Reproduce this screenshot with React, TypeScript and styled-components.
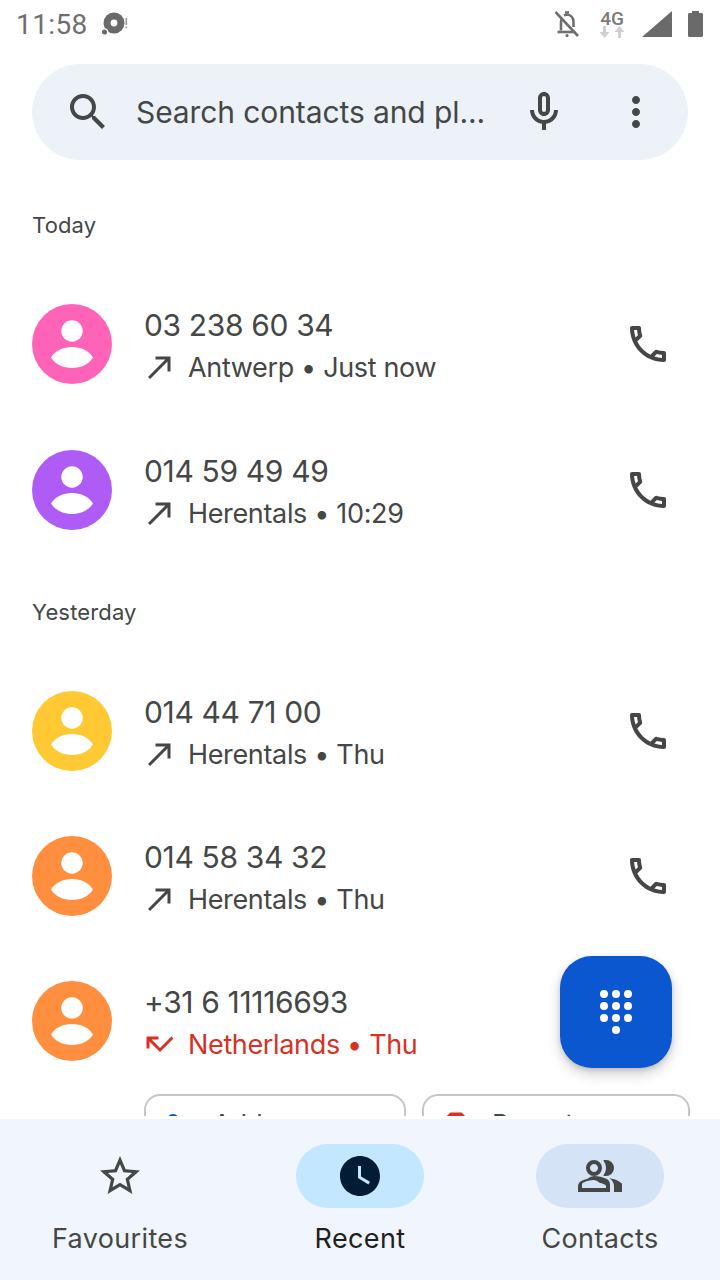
import styled, { createGlobalStyle } from 'styled-components';

const GlobalStyle = createGlobalStyle`
  html, body {
    margin: 0;
    padding: 0;
    background: #fff;
  }
`;

const Screen = styled.div`
  position: relative;
  display: flex;
  flex-direction: column;
  width: 720px;
  height: 1280px;
  overflow: hidden;
  background: #fff;
  font-family: Inter, Roboto, sans-serif;
  color: #444746;
`;

const StatusBar = styled.div`
  display: flex;
  align-items: center;
  flex: none;
  height: 48px;
  padding: 0 17px 0 16px;
`;

const Clock = styled.span`
  font-family: Roboto, sans-serif;
  font-size: 28px;
  color: #6f6f6f;
  letter-spacing: 0.4px;
`;

const StatusLeft = styled.div`
  display: flex;
  align-items: center;
  gap: 13px;
  flex: 1;
`;

const StatusRight = styled.div`
  display: flex;
  align-items: center;
  gap: 16px;
`;

const NetworkBadge = styled.div`
  display: flex;
  flex-direction: column;
  align-items: center;
  width: 28px;
  font-family: Roboto, sans-serif;
  font-size: 19px;
  font-weight: 500;
  line-height: 15px;
  color: #7a7a7a;
`;

const SearchBar = styled.div`
  display: flex;
  align-items: center;
  flex: none;
  height: 96px;
  margin: 16px 32px 0;
  padding: 0 28px 0 32px;
  border-radius: 48px;
  background: #edf2f9;
`;

const SearchLabel = styled.span`
  flex: 1;
  margin-left: 24px;
  font-size: 30px;
  letter-spacing: -0.1px;
  white-space: nowrap;
`;

const MicSlot = styled.div`
  display: flex;
  margin-right: 44px;
`;

const CallList = styled.div`
  flex: 1;
  min-height: 0;
  margin-bottom: 3px;
  overflow: hidden;
`;

const DayHeading = styled.div<{ $top: number }>`
  height: 30px;
  margin: ${(p) => p.$top}px 32px 0;
  font-size: 22px;
  line-height: 30px;
  font-weight: 400;
  letter-spacing: 0.15px;
`;

const CallRow = styled.div<{ $top: number }>`
  display: flex;
  align-items: center;
  height: 80px;
  margin: ${(p) => p.$top}px 32px 0;
`;

const Avatar = styled.svg`
  flex: none;
  width: 80px;
  height: 80px;
`;

const CallText = styled.div`
  flex: 1;
  margin-left: 32px;
  padding-top: 6px;
`;

const CallNumber = styled.div`
  font-size: 30px;
  line-height: 40px;
  letter-spacing: -0.35px;
`;

const CallMeta = styled.div<{ $missed?: boolean }>`
  display: flex;
  align-items: center;
  height: 44px;
  font-size: 27px;
  letter-spacing: -0.35px;
  color: ${(p) => (p.$missed ? '#d93025' : '#444746')};

  svg {
    flex: none;
    margin: 0 10px 0 -2px;
  }
`;

const CallAction = styled.div`
  display: flex;
  flex: none;
  margin-right: 16px;
`;

const ChipRow = styled.div`
  display: flex;
  gap: 16px;
  margin: 33px 30px 0 144px;
`;

const Chip = styled.div<{ $wide?: boolean }>`
  display: flex;
  gap: ${(p) => (p.$wide ? 18 : 22)}px;
  flex: none;
  width: ${(p) => (p.$wide ? 268 : 262)}px;
  height: 60px;
  padding: 12px 0 0 ${(p) => (p.$wide ? 14 : 9)}px;
  box-sizing: border-box;
  border: 2px solid #c4c7c5;
  border-radius: 16px;
  font-size: 26px;
  line-height: 32px;
`;

const DialFab = styled.div`
  position: absolute;
  left: 560px;
  top: 956px;
  display: flex;
  align-items: center;
  justify-content: center;
  width: 112px;
  height: 112px;
  border-radius: 32px;
  background: #0b57d0;
  box-shadow: 0 6px 14px rgba(0, 0, 0, 0.18), 0 2px 5px rgba(0, 0, 0, 0.14);
`;

const BottomNav = styled.nav`
  display: grid;
  grid-template-columns: repeat(3, 1fr);
  flex: none;
  height: 161px;
  background: #f1f5fd;
`;

const NavItem = styled.div`
  display: flex;
  flex-direction: column;
  align-items: center;
  padding-top: 25px;
`;

const NavPill = styled.div<{ $bg?: string }>`
  display: flex;
  align-items: center;
  justify-content: center;
  width: 128px;
  height: 64px;
  border-radius: 32px;
  background: ${(p) => p.$bg ?? 'transparent'};
`;

const NavLabel = styled.div<{ $active?: boolean }>`
  margin-top: 11px;
  font-size: 27px;
  line-height: 40px;
  font-weight: 400;
  letter-spacing: 0.35px;
  color: ${(p) => (p.$active ? '#1f1f1f' : '#444746')};
`;

const Icon = ({ d, size = 48, color = '#444746' }: { d: string; size?: number; color?: string }) => (
  <svg width={size} height={size} viewBox="0 0 24 24" fill={color}>
    <path d={d} />
  </svg>
);

const PATHS = {
  search:
    'M15.5 14h-.79l-.28-.27C15.41 12.59 16 11.11 16 9.5 16 5.91 13.09 3 9.5 3S3 5.91 3 9.5 5.91 16 9.5 16c1.61 0 3.09-.59 4.23-1.57l.27.28v.79l5 4.99L20.49 19l-4.99-5zm-6 0C7.01 14 5 11.99 5 9.5S7.01 5 9.5 5 14 7.01 14 9.5 11.99 14 9.5 14z',
  mic: 'M12 14c1.66 0 3-1.34 3-3V5c0-1.66-1.34-3-3-3S9 3.34 9 5v6c0 1.66 1.34 3 3 3zm-1-9c0-.55.45-1 1-1s1 .45 1 1v6c0 .55-.45 1-1 1s-1-.45-1-1V5zM17 11c0 2.76-2.24 5-5 5s-5-2.24-5-5H5c0 3.53 2.61 6.43 6 6.92V21h2v-3.08c3.39-.49 6-3.39 6-6.92h-2z',
  more: 'M12 8c1.1 0 2-.9 2-2s-.9-2-2-2-2 .9-2 2 .9 2 2 2zm0 2c-1.1 0-2 .9-2 2s.9 2 2 2 2-.9 2-2-.9-2-2-2zm0 6c-1.1 0-2 .9-2 2s.9 2 2 2 2-.9 2-2-.9-2-2-2z',
  call: 'M6.54 5c.06.89.21 1.76.45 2.59l-1.2 1.2c-.41-1.2-.67-2.47-.76-3.79h1.51m9.86 12.02c.85.24 1.72.39 2.6.45v1.49c-1.32-.09-2.59-.35-3.8-.75l1.2-1.19M7.5 3H4c-.55 0-1 .45-1 1 0 9.39 7.61 17 17 17 .55 0 1-.45 1-1v-3.49c0-.55-.45-1-1-1-1.24 0-2.45-.2-3.57-.57-.1-.04-.21-.05-.31-.05-.26 0-.51.1-.71.29l-2.2 2.2c-2.83-1.45-5.15-3.76-6.59-6.59l2.2-2.2c.28-.28.36-.67.25-1.02C8.7 6.45 8.5 5.25 8.5 4c0-.55-.45-1-1-1z',
  made: 'M9 5v2h6.59L4 18.59 5.41 20 17 8.41V15h2V5z',
  missed: 'M19.59 7L12 14.59 6.41 9H11V7H3v8h2v-4.59l7 7 9-9z',
  star: 'M22 9.24l-7.19-.62L12 2 9.19 8.63 2 9.24l5.46 4.73L5.82 21 12 17.27 18.18 21l-1.63-7.03L22 9.24zM12 15.4l-3.76 2.27 1-4.28-3.32-2.88 4.38-.38L12 6.1l1.71 4.04 4.38.38-3.32 2.88 1 4.28L12 15.4z',
  clock: 'M12 2C6.5 2 2 6.5 2 12s4.5 10 10 10 10-4.5 10-10S17.5 2 12 2zm4.2 14.2L11 13V7h1.5v5.2l4.5 2.7-.8 1.3z',
  group:
    'M1 20v-2.8q0-.85.438-1.563.437-.712 1.162-1.087 1.55-.775 3.15-1.163Q7.35 12 9 12t3.25.387q1.6.388 3.15 1.163.725.375 1.162 1.087Q17 15.35 17 16.2V20Zm18 0v-3q0-1.1-.612-2.113-.613-1.012-1.738-1.737 1.275.15 2.4.512 1.125.363 2.1.888.9.5 1.375 1.112Q23 15.275 23 16v4ZM9 12q-1.65 0-2.825-1.175Q5 9.65 5 8q0-1.65 1.175-2.825Q7.35 4 9 4q1.65 0 2.825 1.175Q13 6.35 13 8q0 1.65-1.175 2.825Q10.65 12 9 12Zm10-4q0 1.65-1.175 2.825Q16.65 12 15 12q-.275 0-.7-.062-.425-.063-.7-.138.675-.8 1.037-1.775Q15 9.05 15 8q0-1.05-.363-2.025Q14.275 5 13.6 4.2q.35-.125.7-.162Q14.65 4 15 4q1.65 0 2.825 1.175Q19 6.35 19 8ZM3 18h12v-.8q0-.275-.137-.5-.138-.225-.363-.35-1.35-.675-2.725-1.013Q10.4 14 9 14t-2.775.337Q4.85 14.675 3.5 15.35q-.225.125-.363.35-.137.225-.137.5Zm6-8q.825 0 1.413-.588Q11 8.825 11 8t-.587-1.412Q9.825 6 9 6q-.825 0-1.412.588Q7 7.175 7 8t.588 1.412Q8.175 10 9 10Z',
  person: 'M12 12c2.21 0 4-1.79 4-4s-1.79-4-4-4-4 1.79-4 4 1.79 4 4 4zm0 2c-2.67 0-8 1.34-8 4v2h16v-2c0-2.66-5.33-4-8-4z',
  octagon: 'M15.73 3H8.27L3 8.27v7.46L8.27 21h7.46L21 15.73V8.27L15.73 3z',
};

// Contact placeholder: head and a lens-shaped shoulder blob on a coloured disc
const ContactAvatar = ({ color }: { color: string }) => (
  <Avatar viewBox="0 0 80 80">
    <circle cx="40" cy="40" r="40" fill={color} />
    <circle cx="40" cy="27" r="10.7" fill="#fff" />
    <path d="M19 53.5C23 47 31 43 40 43s17 4 21 10.5C57 60 49 64 40 64s-17-4-21-10.5z" fill="#fff" />
  </Avatar>
);

const BellOffIcon = () => (
  <svg width="30" height="30" viewBox="0 0 30 30" fill="none" stroke="#6f6f6f" strokeWidth="2.6">
    <path d="M9 21.5V13c0-1.3.3-2.4.9-3.4M12 6.6c.9-.6 1.8-.9 3-1.1 4 .4 6.5 3.4 6.5 7.5v5" />
    <path d="M5.5 23h16" />
    <path d="M3.5 3l22.5 24" />
    <path d="M13 3.5h4" />
    <circle cx="15" cy="26.5" r="1.6" fill="#6f6f6f" stroke="none" />
  </svg>
);

const DiscIcon = () => (
  <svg width="28" height="24" viewBox="0 0 28 24">
    <circle cx="13" cy="11" r="10.5" fill="#6a6a6a" />
    <circle cx="13" cy="11" r="3.4" fill="#fff" />
    <circle cx="3.5" cy="20" r="3.2" fill="#6a6a6a" stroke="#fff" strokeWidth="1.2" />
    <rect x="24.5" y="6" width="1.6" height="7" fill="#9a9a9a" />
    <rect x="24.5" y="14.5" width="1.6" height="1.8" fill="#9a9a9a" />
  </svg>
);

const TransferArrows = () => (
  <svg width="28" height="12" viewBox="0 0 28 12" fill="#cfcfcf">
    <path d="M5 0h3v6h3.5L6.5 12 1.5 6H5z" />
    <path d="M20 12h3V6h3.5L21.5 0l-5 6H20z" />
  </svg>
);

const SignalIcon = () => (
  <svg width="30" height="26" viewBox="0 0 30 26">
    <path d="M0 26L30 0v26z" fill="#6a6a6a" />
  </svg>
);

const BatteryIcon = () => (
  <svg width="15" height="26" viewBox="0 0 15 26">
    <path d="M4 0h7v2h2.5c.8 0 1.5.7 1.5 1.5V24.5c0 .8-.7 1.5-1.5 1.5H1.5C.7 26 0 25.3 0 24.5V3.5C0 2.7.7 2 1.5 2H4z" fill="#6a6a6a" />
  </svg>
);

const DialpadIcon = () => (
  <svg width="48" height="48" viewBox="0 0 48 48" fill="#fff">
    {[0, 1, 2].flatMap((row) =>
      [0, 1, 2].map((col) => <circle key={`${row}-${col}`} cx={12 + col * 12} cy={6 + row * 12} r="4" />),
    )}
    <circle cx="24" cy="42" r="4" />
  </svg>
);

type CallEntry = {
  number: string;
  place: string;
  when: string;
  color: string;
  top: number;
  missed?: boolean;
};

const todayCalls: CallEntry[] = [
  { number: '03 238 60 34', place: 'Antwerp', when: 'Just now', color: '#ff63b8', top: 64 },
  { number: '014 59 49 49', place: 'Herentals', when: '10:29', color: '#af5cf7', top: 66 },
];

const yesterdayCalls: CallEntry[] = [
  { number: '014 44 71 00', place: 'Herentals', when: 'Thu', color: '#ffc934', top: 64 },
  { number: '014 58 34 32', place: 'Herentals', when: 'Thu', color: '#ff8f3f', top: 65 },
  { number: '+31 6 11116693', place: 'Netherlands', when: 'Thu', color: '#ff8f3f', top: 65, missed: true },
];

const CallItem = ({ call }: { call: CallEntry }) => (
  <CallRow $top={call.top}>
    <ContactAvatar color={call.color} />
    <CallText>
      <CallNumber>{call.number}</CallNumber>
      <CallMeta $missed={call.missed}>
        <Icon d={call.missed ? PATHS.missed : PATHS.made} size={36} color={call.missed ? '#d93025' : '#444746'} />
        {call.place} • {call.when}
      </CallMeta>
    </CallText>
    {!call.missed && (
      <CallAction>
        <Icon d={PATHS.call} />
      </CallAction>
    )}
  </CallRow>
);

export default function App() {
  return (
    <Screen>
      <GlobalStyle />
      <StatusBar>
        <StatusLeft>
          <Clock>11:58</Clock>
          <DiscIcon />
        </StatusLeft>
        <StatusRight>
          <BellOffIcon />
          <NetworkBadge>
            4G
            <TransferArrows />
          </NetworkBadge>
          <SignalIcon />
          <BatteryIcon />
        </StatusRight>
      </StatusBar>

      <SearchBar>
        <Icon d={PATHS.search} />
        <SearchLabel>Search contacts and pl...</SearchLabel>
        <MicSlot>
          <Icon d={PATHS.mic} />
        </MicSlot>
        <Icon d={PATHS.more} />
      </SearchBar>

      <CallList>
        <DayHeading $top={50}>Today</DayHeading>
        {todayCalls.map((call) => (
          <CallItem key={call.number} call={call} />
        ))}
        <DayHeading $top={67}>Yesterday</DayHeading>
        {yesterdayCalls.map((call) => (
          <CallItem key={call.number} call={call} />
        ))}
        <ChipRow>
          <Chip>
            <Icon d={PATHS.person} size={36} color="#0b57d0" />
            Add
          </Chip>
          <Chip $wide>
            <Icon d={PATHS.octagon} size={36} color="#d93025" />
            Report
          </Chip>
        </ChipRow>
      </CallList>

      <DialFab>
        <DialpadIcon />
      </DialFab>

      <BottomNav>
        <NavItem>
          <NavPill>
            <Icon d={PATHS.star} />
          </NavPill>
          <NavLabel>Favourites</NavLabel>
        </NavItem>
        <NavItem>
          <NavPill $bg="#c2e7ff">
            <Icon d={PATHS.clock} color="#001d35" />
          </NavPill>
          <NavLabel $active>Recent</NavLabel>
        </NavItem>
        <NavItem>
          <NavPill $bg="#d5e3f7">
            <Icon d={PATHS.group} />
          </NavPill>
          <NavLabel>Contacts</NavLabel>
        </NavItem>
      </BottomNav>
    </Screen>
  );
}
